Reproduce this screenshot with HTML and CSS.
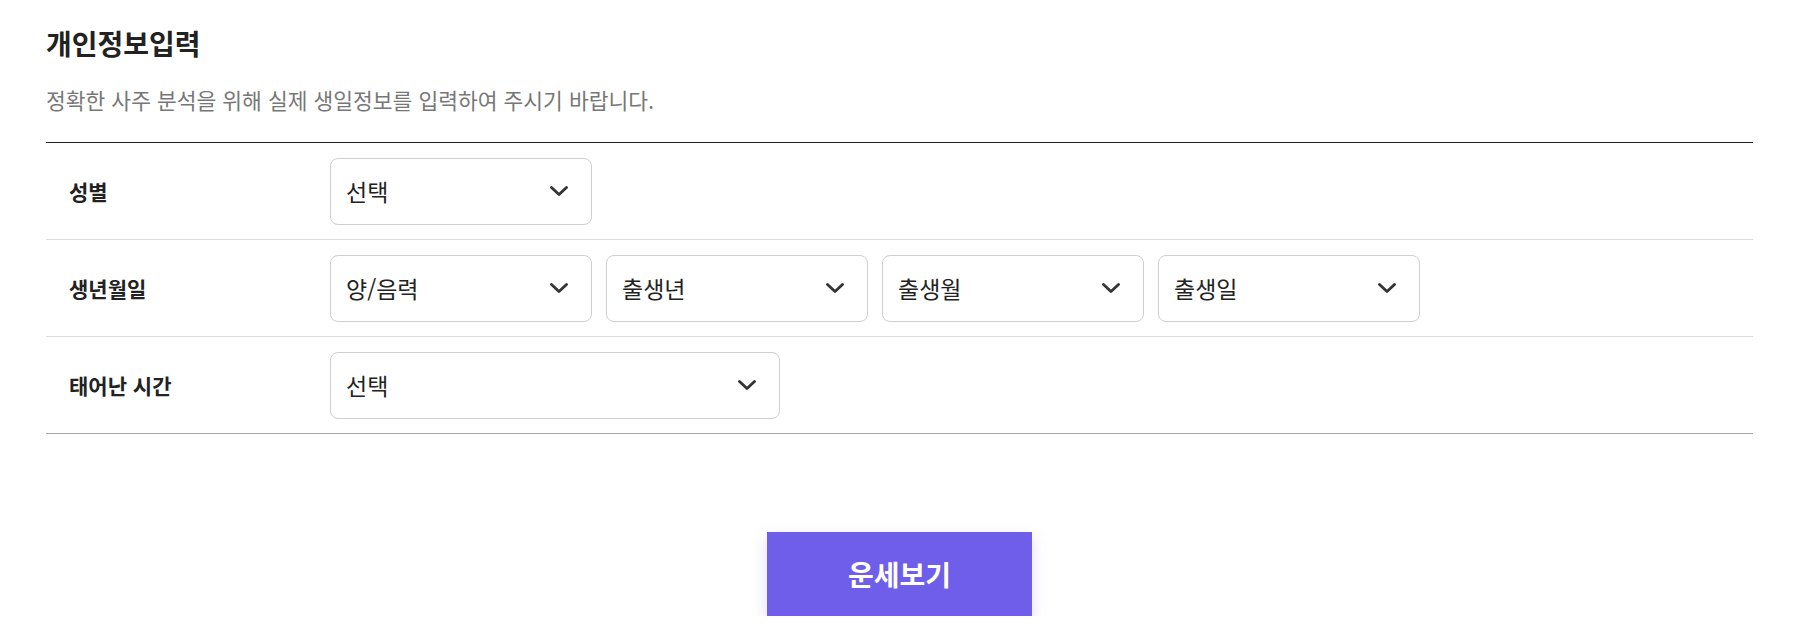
FILE: index.html
```html
<!DOCTYPE html>
<html lang="ko">
<head>
<meta charset="utf-8">
<title>개인정보입력</title>
<link rel="stylesheet" href="styles.css">
</head>
<body>
<main class="page">
  <header class="head">
    <h1 class="title">개인정보입력</h1>
    <p class="desc">정확한 사주 분석을 위해 실제 생일정보를 입력하여 주시기 바랍니다.</p>
  </header>

  <section class="form">
    <div class="row">
      <div class="label">성별</div>
      <div class="fields">
        <div class="select"><span>선택</span><svg class="chev" viewBox="0 0 18 10"><path d="M1.5 1.5 L9 8.5 L16.5 1.5"/></svg></div>
      </div>
    </div>
    <div class="row">
      <div class="label">생년월일</div>
      <div class="fields">
        <div class="select"><span>양/음력</span><svg class="chev" viewBox="0 0 18 10"><path d="M1.5 1.5 L9 8.5 L16.5 1.5"/></svg></div>
        <div class="select"><span>출생년</span><svg class="chev" viewBox="0 0 18 10"><path d="M1.5 1.5 L9 8.5 L16.5 1.5"/></svg></div>
        <div class="select"><span>출생월</span><svg class="chev" viewBox="0 0 18 10"><path d="M1.5 1.5 L9 8.5 L16.5 1.5"/></svg></div>
        <div class="select"><span>출생일</span><svg class="chev" viewBox="0 0 18 10"><path d="M1.5 1.5 L9 8.5 L16.5 1.5"/></svg></div>
      </div>
    </div>
    <div class="row last">
      <div class="label">태어난 시간</div>
      <div class="fields">
        <div class="select wide"><span>선택</span><svg class="chev" viewBox="0 0 18 10"><path d="M1.5 1.5 L9 8.5 L16.5 1.5"/></svg></div>
      </div>
    </div>
  </section>

  <div class="actions">
    <button class="submit" type="button">운세보기</button>
  </div>
</main>
</body>
</html>
```

FILE: styles.css
```css
* { box-sizing: border-box; }
html, body { margin: 0; padding: 0; background: #fff; }
body {
  font-family: "Noto Sans CJK KR", "Noto Sans", sans-serif;
  color: #222;
}
.page {
  padding: 0 46px 0 46px;
}
.head {
  padding-top: 25px;
}
.title {
  margin: 0;
  font-size: 28px;
  line-height: 36px;
  font-weight: 700;
  color: #222;
  letter-spacing: 0;
}
.desc {
  margin: 25px 0 0 0;
  font-size: 21.5px;
  line-height: 28px;
  color: #777;
  letter-spacing: 0;
}
.form {
  margin-top: 28px;
  border-top: 1px solid #222;
}
.row {
  display: flex;
  align-items: center;
  height: 97px;
  border-bottom: 1px solid #dcdcdc;
}
.row.last {
  border-bottom-color: #aaa;
}
.label {
  width: 284px;
  padding-left: 23px;
  font-size: 21px;
  font-weight: 700;
  color: #222;
}
.fields {
  display: flex;
  gap: 14px;
}
.select {
  width: 262px;
  height: 67px;
  border: 1px solid #cfcfcf;
  border-radius: 8px;
  display: flex;
  align-items: center;
  justify-content: space-between;
  padding: 0 23px 0 15px;
  font-size: 23px;
  color: #222;
  background: #fff;
}
.select.wide {
  width: 450px;
}
.chev {
  width: 18px;
  height: 10px;
  fill: none;
  stroke: #333;
  stroke-width: 2.8;
  stroke-linecap: round;
  stroke-linejoin: round;
}
.actions {
  display: flex;
  justify-content: center;
  padding-top: 98px;
}
.submit {
  width: 265px;
  height: 84px;
  border: 0;
  border-radius: 0;
  background: #6f5ee9;
  color: #fff;
  font-family: "Noto Sans CJK KR", "Noto Sans", sans-serif;
  font-size: 28px;
  font-weight: 700;
  box-shadow: 0 6px 14px rgba(111, 94, 233, 0.22);
  cursor: pointer;
}
```
